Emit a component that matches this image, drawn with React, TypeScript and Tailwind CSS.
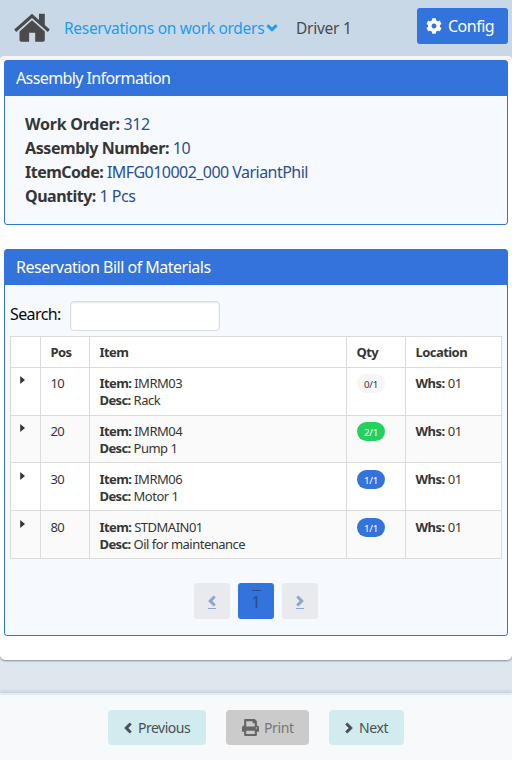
import type { ReactNode } from "react";
import { FaAngleDown, FaAngleLeft, FaAngleRight, FaCog, FaPrint } from "react-icons/fa";

const rows = [
  { pos: "10", item: "IMRM03", desc: "Rack", qty: "0/1", tag: "bg-[#f5f5f5] text-[#363636]", h: "h-12", bg: "bg-white", shift: "" },
  { pos: "20", item: "IMRM04", desc: "Pump 1", qty: "2/1", tag: "bg-[#23d160] text-white", h: "h-[47px]", bg: "bg-[#fafafa]", shift: "" },
  { pos: "30", item: "IMRM06", desc: "Motor 1", qty: "1/1", tag: "bg-[#3273dc] text-white", h: "h-12", bg: "bg-white", shift: "pt-px" },
  { pos: "80", item: "STDMAIN01", desc: "Oil for maintenance", qty: "1/1", tag: "bg-[#3273dc] text-white", h: "h-12", bg: "bg-[#fafafa]", shift: "pt-px" },
];

const details = [
  { label: "Work Order:", value: "312", ls: "tracking-[-0.22px]", vs: "tracking-[-0.4px]" },
  { label: "Assembly Number:", value: "10", ls: "tracking-[-0.42px]", vs: "tracking-[-0.4px]" },
  { label: "ItemCode:", value: "IMFG010002_000 VariantPhil", ls: "tracking-[-0.5px]", vs: "tracking-[-0.54px]" },
  { label: "Quantity:", value: "1 Pcs", ls: "tracking-[-0.5px]", vs: "tracking-[-0.5px]" },
];

function Panel({ title, spacing, children }: { title: string; spacing: string; children: ReactNode }) {
  return (
    <section className="rounded-[3px] border border-[#3273dc] bg-[#f6f9fe]">
      <h2 className={`h-[35px] bg-[#3273dc] pl-[11px] text-[16px] leading-[35px] text-white ${spacing}`}>{title}</h2>
      {children}
    </section>
  );
}

function HomeIcon() {
  return (
    <svg width="36" height="29" viewBox="0 0 36 29" fill="#4a4a4a">
      <path d="M18 .8 25 7V.8h5.8v11.3l5 4.4-2 2.4L18 5.1 2.2 18.9l-2-2.4Z" />
      <path d="M18 7.3 30.8 18.5V27q0 1.8-1.8 1.8h-7.8v-9h-6.1v9H7.3q-1.8 0-1.8-1.8v-8.5Z" />
    </svg>
  );
}

export default function App() {
  return (
    <div className="flex h-[760px] w-[512px] flex-col overflow-hidden bg-[#dee6ee] font-['Noto_Sans','Open_Sans',sans-serif] text-[#363636]">
      <div className="bg-[#c8d8e7]">
        <header className="flex h-14 items-start">
          <div className="ml-3.5 mt-[13px] w-[50px]"><HomeIcon /></div>
          <div className="mt-4 flex w-[232px] items-center text-[16px] leading-6 text-[#209cee]">
            <span className="w-[200px] whitespace-nowrap text-[15.5px] tracking-[-0.3px]">Reservations on work orders</span>
            <FaAngleDown className="size-4 shrink-0 stroke-current [stroke-width:24]" />
          </div>
          <span className="mt-4 text-[15.5px] leading-6 tracking-[-0.25px] text-[#4a4a4a]">Driver 1</span>
          <button className="ml-auto mr-1 mt-2 flex h-9 w-[91px] items-center rounded-[3px] bg-[#3273dc] pl-[9px] text-[16px] text-white">
            <FaCog className="mr-1.5 size-4" />
            <span className="tracking-[-0.5px]">Config</span>
          </button>
        </header>
        <div className="h-1 rounded-t-[5px] bg-[#f7f6f4]" />
      </div>

      <main className="flex h-[600px] flex-col gap-6 rounded-b-[5px] bg-white px-1 shadow-[0_1px_2px_rgba(10,10,10,0.4)]">
        <Panel title="Assembly Information" spacing="tracking-[-0.6px]">
          <div className="h-32 pl-5 pt-4 text-[16px] leading-6">
            {details.map((d) => (
              <p key={d.label}>
                <b className={d.ls}>{d.label}</b>
                <span className={`text-[#2a4f96] ${d.vs}`}> {d.value}</span>
              </p>
            ))}
          </div>
        </Panel>

        <Panel title="Reservation Bill of Materials" spacing="tracking-[-0.5px]">
          <div className="h-[350px] pl-[5px] pt-4">
            <label className="flex h-[30px] items-center text-[16px] tracking-[-0.6px] text-[#0a0a0a]">
              <span className="mb-[5px] w-[60px]">Search:</span>
              <input className="h-[30px] w-[150px] rounded border border-[#dbdbdb] bg-white shadow-[inset_0_1px_2px_rgba(10,10,10,0.1)]" />
            </label>
            <table className="mt-[5px] w-[492px] table-fixed border-separate border-spacing-0 border-b border-r border-[#dbdbdb] text-[13px] leading-[17px]">
              <colgroup>
                <col className="w-[30px]" />
                <col className="w-[49px]" />
                <col className="w-[257px]" />
                <col className="w-[59px]" />
                <col className="w-[96px]" />
              </colgroup>
              <thead>
                <tr className="h-[31px] bg-white text-left">
                  {["", "Pos", "Item", "Qty", "Location"].map((h) => (
                    <th key={h} className="border-l border-t border-[#dbdbdb] p-0 pl-[9.5px] font-bold tracking-[-0.55px]">{h}</th>
                  ))}
                </tr>
              </thead>
              <tbody>
                {rows.map((r) => (
                  <tr key={r.pos} className={`${r.h} ${r.bg} align-top`}>
                    <td className="border-l border-t border-[#dbdbdb] p-0 pl-[9px] pt-2">
                      <div className={r.shift}>
                        <svg width="6" height="8" viewBox="0 0 6 8" fill="#363636"><path d="M.2 0 5 4 .2 8Z" /></svg>
                      </div>
                    </td>
                    <td className="border-l border-t border-[#dbdbdb] p-0 pl-[9.5px] pt-[7px] tracking-[-0.6px]">
                      <div className={r.shift}>{r.pos}</div>
                    </td>
                    <td className="border-l border-t border-[#dbdbdb] p-0 pl-[9.5px] pt-[7px] tracking-[-0.5px]">
                      <div className={r.shift}>
                        <p><b className="tracking-[-0.6px]">Item:</b> {r.item}</p>
                        <p><b className="tracking-[-0.6px]">Desc:</b> {r.desc}</p>
                      </div>
                    </td>
                    <td className="border-l border-t border-[#dbdbdb] p-0 pl-2.5 pt-1.5">
                      <div className={r.shift}>
                        <span className={`flex h-[19px] w-7 items-center justify-center rounded-full pt-px text-[9.75px] tracking-[-0.2px] ${r.tag}`}>{r.qty}</span>
                      </div>
                    </td>
                    <td className="border-l border-t border-[#dbdbdb] p-0 pl-[9.5px] pt-[7px] tracking-[-0.4px]">
                      <div className={r.shift}><b className="tracking-[-0.5px]">Whs:</b> 01</div>
                    </td>
                  </tr>
                ))}
              </tbody>
            </table>
            <nav className="mt-6 flex justify-center gap-2 pr-[5px]">
              <button className="flex size-9 flex-col items-center rounded-[3px] bg-[#e8eaed] pt-2.5 text-[#8da4d0]">
                <FaAngleLeft className="size-4 stroke-current [stroke-width:20]" />
                <span className="-mt-px h-px w-2 bg-[#8da4d0]" />
              </button>
              <button className="flex size-9 flex-col items-center rounded-[3px] bg-[#3273dc] pt-[7px] text-[16px] leading-[22px] text-[#294b88]">
                <span className="h-px w-[9px] bg-[#294b88]" />
                <span>1</span>
              </button>
              <button className="flex size-9 flex-col items-center rounded-[3px] bg-[#e8eaed] pt-2.5 text-[#8da4d0]">
                <FaAngleRight className="size-4 stroke-current [stroke-width:20]" />
                <span className="-mt-px h-px w-2 bg-[#8da4d0]" />
              </button>
            </nav>
          </div>
        </Panel>
      </main>

      <footer className="mt-[33px] flex h-[67px] items-start gap-5 border-t-2 border-[#e8ebed] bg-[#f8f9fb] pl-[108px] pt-[15px] text-[14px] text-[#4a4f57] shadow-[0_-1px_4px_rgba(10,10,10,0.15)]">
        <button className="flex h-[35px] w-[98px] items-center rounded bg-[#d1ebef] pl-3">
          <FaAngleLeft className="mr-0.5 size-4 stroke-current [stroke-width:20]" />
          <span className="tracking-[-0.5px]">Previous</span>
        </button>
        <button className="flex h-[35px] w-[83px] items-center rounded bg-[#cbcbcb] pl-4 text-[#666]">
          <FaPrint className="mr-[5px] size-[17px]" />
          <span className="tracking-[-0.4px] text-[#777]">Print</span>
        </button>
        <button className="flex h-[35px] w-[75px] items-center rounded bg-[#d1ebef] pl-3">
          <FaAngleRight className="mr-0.5 size-4 stroke-current [stroke-width:20]" />
          <span className="tracking-[-0.4px]">Next</span>
        </button>
      </footer>
    </div>
  );
}
